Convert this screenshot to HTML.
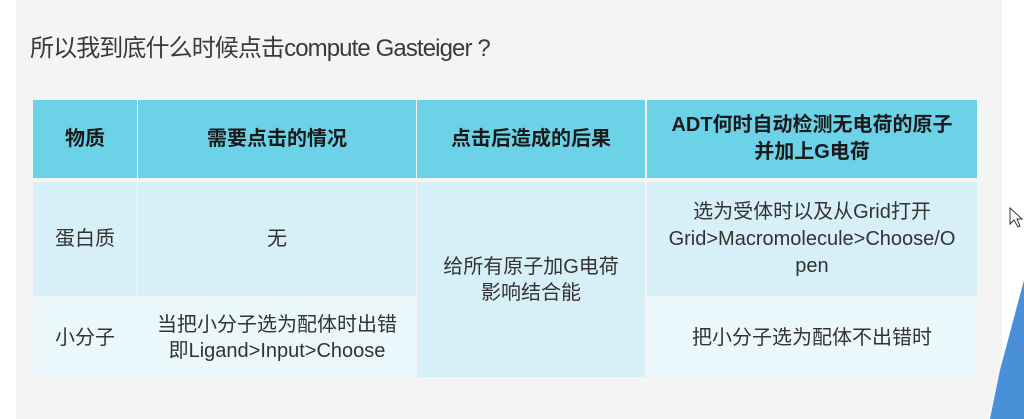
<!DOCTYPE html>
<html><head><meta charset="utf-8"><style>
body{margin:0;width:1024px;height:419px;overflow:hidden;background:#fff;font-family:"Liberation Sans","Noto Sans CJK SC",sans-serif;position:relative}
.slide{position:absolute;left:16px;top:0;width:986px;height:419px;background:#f4f4f5}
.title{position:absolute;left:30px;top:28px;font-size:24px;color:#3a3a3a;white-space:nowrap;letter-spacing:-0.9px}
.c{position:absolute;display:flex;align-items:center;justify-content:center;text-align:center;font-size:20px;color:#333;line-height:26px;white-space:nowrap}
.h{background:#6cd2e8;font-weight:bold;color:#1a1a1a}
.r1{background:#d7eff7}
.r2{background:#eaf7fb}
</style></head><body>
<div class="slide"></div>
<div class="title">所以我到底什么时候点击compute Gasteiger ?</div>
<div class="c h" style="left:33px;top:100px;width:104px;height:78px">物质</div>
<div class="c h" style="left:138px;top:100px;width:278px;height:78px">需要点击的情况</div>
<div class="c h" style="left:417px;top:100px;width:228px;height:78px">点击后造成的后果</div>
<div class="c h" style="left:647px;top:100px;width:330px;height:78px;line-height:27px">ADT何时自动检测无电荷的原子<br>并加上G电荷</div>
<div class="c r1" style="left:33px;top:182px;width:104px;height:114px">蛋白质</div>
<div class="c r1" style="left:138px;top:182px;width:278px;height:114px">无</div>
<div class="c r1" style="left:417px;top:182px;width:228px;height:195px;line-height:26px">给所有原子加G电荷<br>影响结合能</div>
<div class="c r1" style="left:647px;top:182px;width:330px;height:114px;line-height:27px">选为受体时以及从Grid打开<br>Grid&gt;Macromolecule&gt;Choose/O<br>pen</div>
<div class="c r2" style="left:33px;top:298px;width:104px;height:79px">小分子</div>
<div class="c r2" style="left:138px;top:298px;width:278px;height:79px;line-height:26px">当把小分子选为配体时出错<br>即Ligand&gt;Input&gt;Choose</div>
<div class="c r2" style="left:647px;top:298px;width:330px;height:79px">把小分子选为配体不出错时</div>
<svg style="position:absolute;left:990px;top:200px" width="34" height="219"><polygon points="34,80 34,219 0,219 10,170" fill="#4a90d9"/><path d="M20 8 L20 24 L24 20 L28 27 L30 26 L27 19 L32 19 Z" fill="#fff" stroke="#333" stroke-width="1"/></svg>
</body></html>
